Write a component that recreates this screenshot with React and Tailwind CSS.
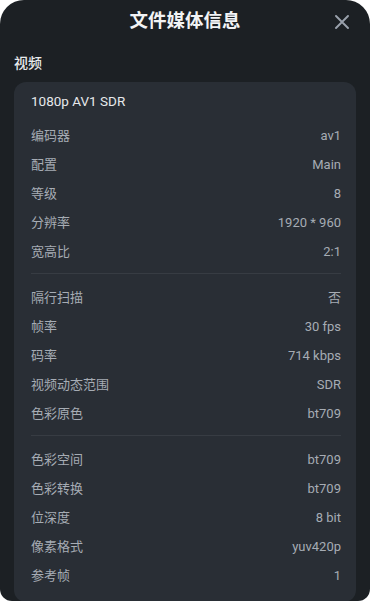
import React from 'react';

const groups = [
  [
    ['编码器', 'av1'],
    ['配置', 'Main'],
    ['等级', '8'],
    ['分辨率', '1920 * 960'],
    ['宽高比', '2:1'],
  ],
  [
    ['隔行扫描', '否'],
    ['帧率', '30 fps'],
    ['码率', '714 kbps'],
    ['视频动态范围', 'SDR'],
    ['色彩原色', 'bt709'],
  ],
  [
    ['色彩空间', 'bt709'],
    ['色彩转换', 'bt709'],
    ['位深度', '8 bit'],
    ['像素格式', 'yuv420p'],
    ['参考帧', '1'],
  ],
];

const font = { fontFamily: '"Roboto", "Noto Sans CJK SC", sans-serif' };

const InfoRow = ({ label, value }) => (
  <div className="flex h-[29px] items-center justify-between text-[13px] text-[#a6acb4]">
    <span>{label}</span>
    <span>{value}</span>
  </div>
);

export default function App() {
  return (
    <div className="w-[370px] h-[601px] bg-white" style={font}>
      <div className="flex h-full flex-col overflow-hidden rounded-t-[24px] rounded-b-[12px] bg-[#1c2024]">
        {/* Header */}
        <div className="relative flex h-[44px] shrink-0 items-center justify-center">
          <h1 className="text-[18.5px] font-bold text-[#f2f3f5]">文件媒体信息</h1>
          <button className="absolute right-[21px] top-[15px] text-[#9aa1ac]">
            <svg width="14" height="14" viewBox="0 0 14 14" fill="none" stroke="currentColor" strokeWidth="1.9" strokeLinecap="round">
              <path d="M1 1 L13 13 M13 1 L1 13" />
            </svg>
          </button>
        </div>

        {/* Section */}
        <div className="flex h-[38px] shrink-0 items-center px-[14px] pt-[1px]">
          <span className="text-[14px] font-medium text-[#e8eaed]">视频</span>
        </div>

        <div className="mx-[14px] rounded-[12px] bg-[#292e35] pl-[17px] pr-[15px] pt-[9px] pb-[12px]">
          <div className="mb-[10px] h-[20px] text-[13.5px] leading-[20px] text-[#e6e8eb]">1080p AV1 SDR</div>
          {groups.map((rows, i) => (
            <div key={i}>
              {i > 0 && <div className="mt-[7px] mb-[9px] h-px bg-[#373c43]" />}
              {rows.map(([label, value]) => (
                <InfoRow key={label} label={label} value={value} />
              ))}
            </div>
          ))}
        </div>
      </div>
    </div>
  );
}
